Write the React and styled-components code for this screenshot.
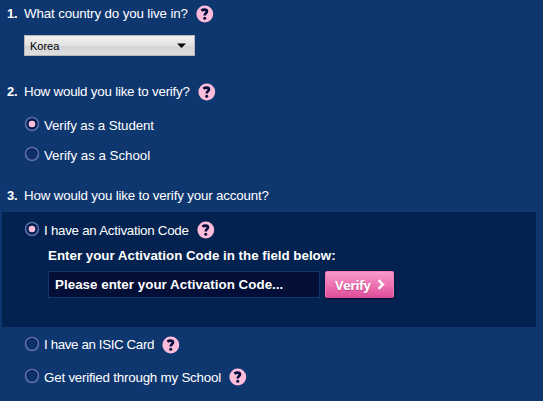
import React, { useState } from "react";
import styled, { createGlobalStyle } from "styled-components";

export default function App() {
    const [role, setRole] = useState("student");
    const [method, setMethod] = useState("code");

    return (
        <>
        <GlobalStyle />
        <VerifyForm>
            <Question $height={27}>
                <Num>1.</Num><Label $width={164} $spacing={-0.13}>What country do you live in?</Label><Help />
            </Question>
            <SelectRow>
                <Select type="button">
                    Korea
                    <svg width="9" height="5" viewBox="0 0 9 5"><path d="M0 0.5h9L4.5 5z" fill="#000" /></svg>
                </Select>
            </SelectRow>

            <Question $height={32}>
                <Num>2.</Num><Label $width={166} $spacing={-0.21}>How would you like to verify?</Label><Help />
            </Question>
            <Option height={34} spacing={-0.1} label="Verify as a Student" checked={role === "student"} onClick={() => setRole("student")} />
            <Option height={26} spacing={-0.03} label="Verify as a School" checked={role === "school"} onClick={() => setRole("school")} />

            <Question $height={44} $top={11}>
                <Num>3.</Num><Label $spacing={-0.17}>How would you like to verify your account?</Label>
            </Question>
            <Panel>
                <Option height={34} width={145} spacing={-0.26} label="I have an Activation Code" help checked={method === "code"} onClick={() => setMethod("code")} />
                <CodeArea>
                    <CodeTitle>Enter your Activation Code in the field below:</CodeTitle>
                    <CodeRow>
                        <CodeInput type="text" defaultValue="Please enter your Activation Code..." />
                        <VerifyButton type="button">
                            Verify
                            <svg width="8" height="11" viewBox="0 0 8 11"><path d="M1.5 1.1L5.9 5.5L1.5 9.9" fill="none" stroke="#fff" strokeWidth="2.5" /></svg>
                        </VerifyButton>
                    </CodeRow>
                </CodeArea>
            </Panel>
            <Option height={35} width={110} spacing={-0.37} label="I have an ISIC Card" help checked={method === "isic"} onClick={() => setMethod("isic")} />
            <Option height={30} width={177} spacing={-0.2} label="Get verified through my School" help checked={method === "school"} onClick={() => setMethod("school")} />
        </VerifyForm>
        </>
    )
}

function Option({ height, width, spacing, label, help, checked, onClick }) {
    return (
        <OptionRow $height={height} onClick={onClick}>
            <svg width="16" height="16" viewBox="0 0 16 16">
                <circle cx="8" cy="8" r="6.4" fill={checked ? "#03204d" : "#0d3068"} stroke="#5e6cac" strokeWidth="1.7" />
                <path d="M3 7.8A5 5 0 0 1 13 7.8" fill="none" stroke="#041c4a" strokeWidth="1.1" />
                {checked && <circle cx="8" cy="8" r="3.3" fill="#ffbfdc" />}
            </svg>
            <Label $width={width} $spacing={spacing}>{label}</Label>
            {help && <Help />}
        </OptionRow>
    )
}

function Help() {
    return (
        <svg width="18" height="18" viewBox="0 0 18 18">
            <circle cx="8.8" cy="9" r="8.4" fill="#ffbcdb" />
            <path d="M5.4 5.7C6.3 4.9 7.3 4.6 8.5 4.6C10.2 4.6 11 5.3 11 6.4C11 8.1 8.7 8.1 8.7 10.6" fill="none" stroke="#050d3d" strokeWidth="2.6" />
            <circle cx="8.7" cy="13.2" r="1.5" fill="#050d3d" />
        </svg>
    )
}

const GlobalStyle = createGlobalStyle`
    body {
        margin: 0; background-color: #0f376f;
    }
`

const VerifyForm = styled.form`
    width: 543px; height: 401px; overflow: hidden; box-sizing: border-box; background-color: #0f376f; color: #fff;
    font-family: "Liberation Sans", Arial, sans-serif; font-size: 13.33px; line-height: 16px;
    svg {
        display: block; flex: none;
    }
`

const Question = styled.div`
    display: flex; align-items: center; box-sizing: border-box; height: ${props => props.$height}px; padding: ${props => props.$top || 0}px 0 0 7px;
`

const Num = styled.b`
    width: 17px; font-size: 13px; letter-spacing: -0.3px;
`

const Label = styled.span`
    flex: none; width: ${props => props.$width ? props.$width + "px" : "auto"}; letter-spacing: ${props => props.$spacing || 0}px;
    white-space: nowrap; margin-right: 8px;
`

const SelectRow = styled.div`
    height: 41px; padding: 8px 0 0 24px;
`

const Select = styled.button`
    display: flex; align-items: center; justify-content: space-between; box-sizing: border-box; width: 171px; height: 21px; padding: 0 8px 0 5px;
    border: 1px solid #b6b6b6; border-radius: 0; color: #000; font: 11px "Liberation Sans", Arial, sans-serif;
    background: linear-gradient(#f0f0f0 0%, #e2e2e2 50%, #d0d4d8 52%, #dedede 100%);
`

const OptionRow = styled.div`
    display: flex; align-items: center; height: ${props => props.$height}px; padding-left: 24px;
    > svg:first-child {
        margin: 0 4px 2px 0;
    }
    > ${Label} {
        padding-top: 1px;
    }
`

const Panel = styled.div`
    box-sizing: border-box; width: 534px; height: 115px; margin: 0 0 0 2px; background-color: #03224f;
    > ${OptionRow} {
        padding: 1px 0 0 22px;
    }
`

const CodeArea = styled.div`
    padding-left: 46px;
`

const CodeTitle = styled.div`
    height: 24px; font-weight: bold; line-height: 17px;
`

const CodeRow = styled.div`
    display: flex; gap: 5px;
`

const CodeInput = styled.input`
    box-sizing: border-box; width: 272px; height: 27px; padding: 0 6px; margin: 0; border: 1px solid #0f376b; outline: none;
    background-color: #040f38; color: #fff; font: bold 13.33px "Liberation Sans", Arial, sans-serif; letter-spacing: 0.04px;
`

const VerifyButton = styled.button`
    display: flex; align-items: center; gap: 7px; box-sizing: border-box; width: 69px; height: 27px; padding: 0 0 0 9px;
    border: 1px solid #f47bb5; border-bottom-color: #dc4b95; border-radius: 2px; background: linear-gradient(#fa9aca, #e04e9b);
    box-shadow: 0 1px 2px #010f2d; color: #fff; font: bold 13px "Open Sans", sans-serif; letter-spacing: -0.5px; text-shadow: 0 1px 1px #b84380;
`
